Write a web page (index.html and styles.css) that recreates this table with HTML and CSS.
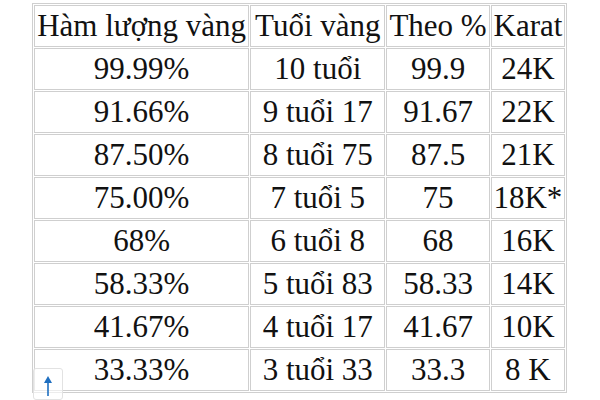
FILE: index.html
```html
<!DOCTYPE html>
<html lang="vi">
<head>
<meta charset="utf-8">
<link rel="stylesheet" href="styles.css">
</head>
<body>
<div class="wrap">
<table class="gold">
  <colgroup>
    <col class="c1"><col class="c2"><col class="c3"><col class="c4">
  </colgroup>
  <tr><td>Hàm lượng vàng</td><td>Tuổi vàng</td><td>Theo %</td><td>Karat</td></tr>
  <tr><td>99.99%</td><td>10 tuổi</td><td>99.9</td><td>24K</td></tr>
  <tr><td>91.66%</td><td>9 tuổi 17</td><td>91.67</td><td>22K</td></tr>
  <tr><td>87.50%</td><td>8 tuổi 75</td><td>87.5</td><td>21K</td></tr>
  <tr><td>75.00%</td><td>7 tuổi 5</td><td>75</td><td>18K*</td></tr>
  <tr><td>68%</td><td>6 tuổi 8</td><td>68</td><td>16K</td></tr>
  <tr><td>58.33%</td><td>5 tuổi 83</td><td>58.33</td><td>14K</td></tr>
  <tr><td>41.67%</td><td>4 tuổi 17</td><td>41.67</td><td>10K</td></tr>
  <tr><td>33.33%</td><td>3 tuổi 33</td><td>33.3</td><td>8 K</td></tr>
</table>
<div class="totop">
  <svg width="10" height="22" viewBox="0 0 10 22"><path d="M5 21V4" stroke="#1f6fc0" stroke-width="1.6" fill="none"/><path d="M1 8L5 1L9 8Z" fill="#1f6fc0"/></svg>
</div>
</div>
</body>
</html>
```

FILE: styles.css
```css
html, body {
  margin: 0;
  padding: 0;
  background: #fff;
}
.wrap {
  position: relative;
  width: 600px;
  height: 400px;
  overflow: hidden;
  padding: 3px 0 0 32px;
  box-sizing: border-box;
}
.gold {
  table-layout: fixed;
  border-collapse: separate;
  border-spacing: 1px;
  border: 1px solid #cfcfcf;
  width: 535px;
  font-family: "Liberation Serif", "Times New Roman", serif;
  font-size: 31px;
  color: #111;
}
.c1 { width: 212px; }
.c2 { width: 133px; }
.c3 { width: 102px; }
.c4 { width: 73px; }
.gold td {
  border: 1px solid #cfcfcf;
  height: 40px;
  padding: 0;
  text-align: center;
  vertical-align: middle;
  white-space: nowrap;
  line-height: 40px;
}
.totop {
  position: absolute;
  left: 33px;
  top: 368px;
  width: 28px;
  height: 30px;
  border: 1px solid #e2e2e2;
  border-radius: 3px;
  background: rgba(255,255,255,0.6);
  display: flex;
  justify-content: center;
  align-items: flex-end;
}
.totop svg { display: block; margin-bottom: 2px; }
```
